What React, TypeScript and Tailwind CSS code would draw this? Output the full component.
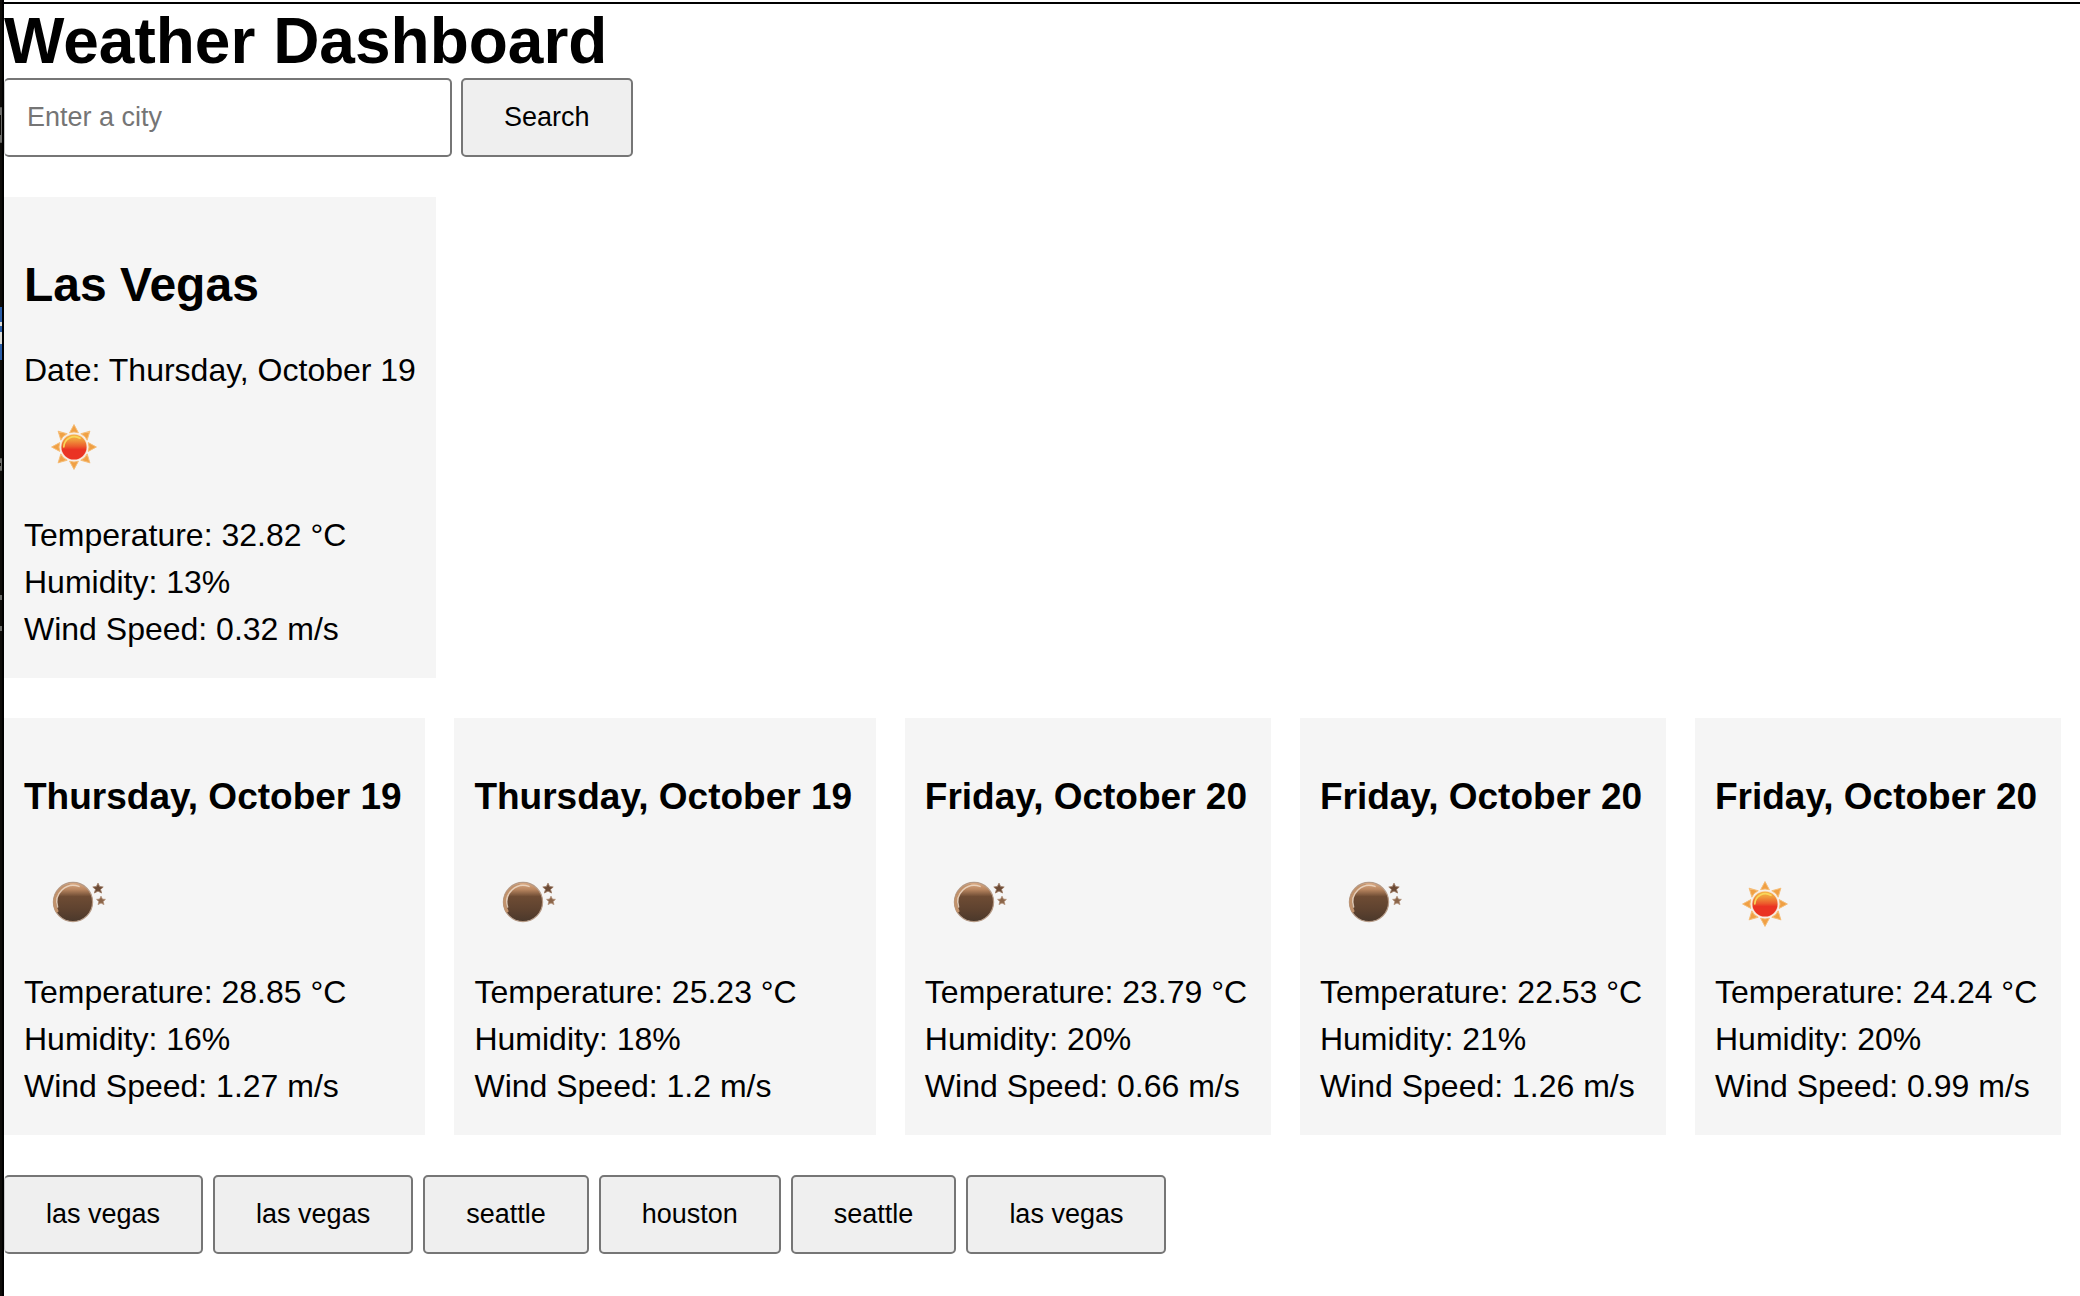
import React, { useId, useState } from "react";

type Condition = "sun" | "moon";

interface Reading {
  heading: string;
  condition: Condition;
  temperature: string;
  humidity: string;
  wind: string;
}

const current = {
  city: "Las Vegas",
  date: "Thursday, October 19",
  condition: "sun" as Condition,
  temperature: "32.82",
  humidity: "13",
  wind: "0.32",
};

const forecast: Reading[] = [
  { heading: "Thursday, October 19", condition: "moon", temperature: "28.85", humidity: "16", wind: "1.27" },
  { heading: "Thursday, October 19", condition: "moon", temperature: "25.23", humidity: "18", wind: "1.2" },
  { heading: "Friday, October 20", condition: "moon", temperature: "23.79", humidity: "20", wind: "0.66" },
  { heading: "Friday, October 20", condition: "moon", temperature: "22.53", humidity: "21", wind: "1.26" },
  { heading: "Friday, October 20", condition: "sun", temperature: "24.24", humidity: "20", wind: "0.99" },
];

const history = ["las vegas", "las vegas", "seattle", "houston", "seattle", "las vegas"];

function SunIcon() {
  const id = useId();
  return (
    <svg viewBox="0 0 100 100" className="block size-[100px]" role="img" aria-label="Clear sky">
      <defs>
        <linearGradient id={id} x1="0" y1="0" x2="0" y2="1">
          <stop offset="0" stopColor="#f5b347" />
          <stop offset="0.22" stopColor="#f09a3c" />
          <stop offset="0.48" stopColor="#ec5a2c" />
          <stop offset="0.6" stopColor="#ea3323" />
          <stop offset="1" stopColor="#ea3323" />
        </linearGradient>
      </defs>
      {[0, 45, 90, 135, 180, 225, 270, 315].map((angle) => (
        <path
          key={angle}
          d="M50 27.6 L54.4 35.8 Q50 34.2 45.6 35.8 Z"
          fill="#f0a044"
          stroke="#f5bd78"
          strokeWidth="1"
          strokeLinejoin="round"
          transform={`rotate(${angle} 50 50)`}
        />
      ))}
      <circle cx="50" cy="50" r="13.6" fill="#fae3cf" />
      <circle cx="50" cy="50" r="12.6" fill={`url(#${id})`} />
      <path d="M39.8 50 A10.6 10.6 0 0 1 56 41.3" fill="none" stroke="#f8d75a" strokeWidth="1.6" strokeLinecap="round" />
    </svg>
  );
}

function MoonIcon() {
  const id = useId();
  return (
    <svg viewBox="0 0 100 100" className="block size-[100px]" role="img" aria-label="Clear night">
      <defs>
        <linearGradient id={id} x1="0" y1="0" x2="0" y2="1">
          <stop offset="0" stopColor="#dfae86" />
          <stop offset="0.18" stopColor="#b98660" />
          <stop offset="0.36" stopColor="#6e4c34" />
          <stop offset="0.7" stopColor="#5e422f" />
          <stop offset="1" stopColor="#4a382b" />
        </linearGradient>
      </defs>
      <circle cx="49" cy="48" r="19.6" fill={`url(#${id})`} stroke="#b59a86" strokeWidth="1.2" />
      <path d="M33 57 A17.6 17.6 0 0 1 45 31.4" fill="none" stroke="#c1926c" strokeWidth="3" strokeLinecap="round" />
      <path d="M33.6 53 A16.6 16.6 0 0 1 55 32.4" fill="none" stroke="#efdac8" strokeWidth="1.5" strokeLinecap="round" opacity="0.85" />
      <path
        d="M74 29.2 L75.6 32.6 L79.2 33 L76.5 35.5 L77.6 39 L74 37.1 L70.4 39 L71.5 35.5 L68.8 33 L72.4 32.6 Z"
        fill="#6b4a35"
        stroke="#9c7b64"
        strokeWidth="0.9"
      />
      <path
        d="M77 42.2 L78.4 45.1 L81.4 45.4 L79.1 47.6 L80 50.6 L77 49 L74 50.6 L74.9 47.6 L72.6 45.4 L75.6 45.1 Z"
        fill="#8a6448"
        stroke="#b08e76"
        strokeWidth="0.8"
      />
    </svg>
  );
}

function ConditionIcon({ condition }: { condition: Condition }) {
  return condition === "sun" ? <SunIcon /> : <MoonIcon />;
}

function Stats({ temperature, humidity, wind }: Pick<Reading, "temperature" | "humidity" | "wind">) {
  return (
    <div className="mt-[15px] text-[32px] leading-[47px]">
      <p>Temperature: {temperature} °C</p>
      <p>Humidity: {humidity}%</p>
      <p>Wind Speed: {wind} m/s</p>
    </div>
  );
}

/* Sliver of the desktop showing past the window's left edge. */
function DesktopEdge() {
  return (
    <svg className="absolute inset-y-0 left-0 h-full w-1" aria-hidden="true">
      <rect width="4" height="100%" fill="#000" />
      <rect width="2" height="100%" fill="#0e0c09" />
      <rect y="107" width="2" height="36" rx="1" fill="#6b6b68" />
      <rect y="115" width="1" height="20" fill="#0e0c09" />
      <rect y="307" width="2" height="53" fill="#2b5ea8" />
      <rect y="322" width="2" height="4" fill="#dcdcd8" />
      <rect y="332" width="2" height="12" fill="#dcdcd8" />
      <rect y="458" width="2" height="13" rx="1" fill="#6b6b68" />
      <rect y="463" width="1" height="3" fill="#0e0c09" />
      <rect y="595" width="2" height="5" fill="#6b6b68" />
      <rect y="626" width="2" height="5" fill="#6b6b68" />
    </svg>
  );
}

const buttonClass =
  "h-[79px] cursor-pointer rounded-[5px] border-2 border-[#767676] bg-[#efefef] px-[41px] text-[27px] text-black";

export default function App() {
  const [city, setCity] = useState("");

  return (
    <div className="relative min-h-screen bg-white pt-0.5 pl-1 font-['Liberation_Sans',Arial,sans-serif] text-black">
      <DesktopEdge />
      <main className="border-t-2 border-black">
        <h1 className="text-[64px] leading-[74px] font-bold">Weather Dashboard</h1>

        <form className="flex flex-wrap gap-[9px]" onSubmit={(event) => event.preventDefault()}>
          <input
            type="text"
            aria-label="City"
            placeholder="Enter a city"
            value={city}
            onChange={(event) => setCity(event.target.value)}
            className="h-[79px] w-[448px] rounded-[5px] border-2 border-l border-[#767676] border-l-[#c8c8c8] bg-white px-[22px] text-[27px] placeholder:text-[#757575]"
          />
          <button type="submit" className={buttonClass}>
            Search
          </button>
        </form>

        <section className="mt-10 w-fit bg-[#f5f5f5] px-5 pt-[60px] pb-[25px]">
          <h2 className="text-[48px] leading-[56px] font-bold">{current.city}</h2>
          <p className="mt-[34px] mb-[3px] text-[32px] leading-[47px]">Date: {current.date}</p>
          <ConditionIcon condition={current.condition} />
          <Stats {...current} />
        </section>

        <section className="mt-10 mr-[19px] flex gap-[29px]">
          {forecast.map((day, index) => (
            <article key={index} className="flex-auto bg-[#f5f5f5] px-5 pt-[55px] pb-[25px]">
              <h3 className="mb-[33px] text-[37px] leading-[48px] font-bold whitespace-nowrap">{day.heading}</h3>
              <ConditionIcon condition={day.condition} />
              <Stats {...day} />
            </article>
          ))}
        </section>

        <nav className="mt-10 flex flex-wrap gap-[10px] pb-10" aria-label="Search history">
          {history.map((name, index) => (
            <button
              key={index}
              type="button"
              className={`${buttonClass} first:border-l first:border-l-[#c8c8c8]`}
              onClick={() => setCity(name)}
            >
              {name}
            </button>
          ))}
        </nav>
      </main>
    </div>
  );
}
